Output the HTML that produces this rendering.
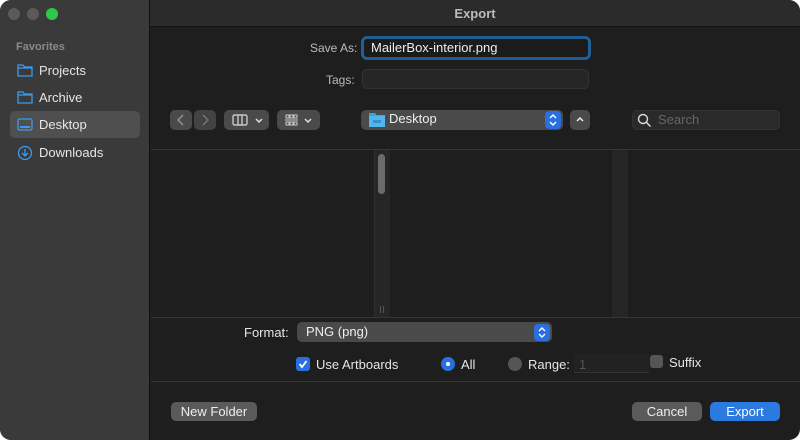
<!DOCTYPE html>
<html><head><meta charset="utf-8"><style>
*{box-sizing:border-box;margin:0;padding:0}
body{width:800px;height:441px;background:#fff;font-family:"Liberation Sans",sans-serif;overflow:hidden;position:relative;font-size:13px;color:#ddd}
.win{position:absolute;left:0;top:0;width:800px;height:440px;border-radius:11px;overflow:hidden;background:#1e1e1e}
.side{position:absolute;left:0;top:0;width:150px;height:440px;background:#3a3a3a;border-right:1px solid #111}
.title{position:absolute;left:150px;top:0;right:0;height:27px;background:#2b2b2b;border-bottom:1px solid #111;text-align:center;font-weight:bold;color:#bbb;line-height:27px;font-size:13px}
.dot{position:absolute;top:8px;width:12px;height:12px;border-radius:50%;background:#5a5a5a}
.abs{position:absolute}
.item{position:absolute;left:17px;font-size:13px;color:#e6e6e6}
.btn{position:absolute;background:#555;border-radius:5px}
.lbl{position:absolute;font-size:12px;color:#bbb}
</style></head><body>
<div class="win">
<div class="side">
 <div class="dot" style="left:8px"></div><div class="dot" style="left:27px"></div><div class="dot" style="left:46px;background:#2ec84a"></div>
 <div class="abs" style="left:16px;top:41px;font-size:11px;color:#8a8a8a;font-weight:bold">Favorites</div>
 <div class="abs" style="left:10px;top:111px;width:130px;height:27px;border-radius:5px;background:#4f4f4f"></div>
 <svg class="abs" style="left:17px;top:63px" width="16" height="14"><path d="M1 2h5l1.5 2H15v9H1z M1 5h14" fill="none" stroke="#3b9bf0" stroke-width="1.3"/></svg>
 <svg class="abs" style="left:17px;top:90px" width="16" height="14"><path d="M1 2h5l1.5 2H15v9H1z M1 5h14" fill="none" stroke="#3b9bf0" stroke-width="1.3"/></svg>
 <svg class="abs" style="left:17px;top:118px" width="16" height="14"><rect x="1" y="1" width="14" height="11" rx="1.5" fill="none" stroke="#3b9bf0" stroke-width="1.3"/><rect x="3" y="8" width="10" height="2" fill="#3b9bf0"/></svg>
 <svg class="abs" style="left:17px;top:145px" width="16" height="16"><circle cx="8" cy="8" r="6.5" fill="none" stroke="#3b9bf0" stroke-width="1.3"/><path d="M8 4v7M5 8l3 3 3-3" fill="none" stroke="#3b9bf0" stroke-width="1.3"/></svg>
 <div class="abs" style="left:39px;top:63px;font-size:13px;color:#e6e6e6">Projects</div>
 <div class="abs" style="left:39px;top:90px;font-size:13px;color:#e6e6e6">Archive</div>
 <div class="abs" style="left:39px;top:117px;font-size:13px;color:#e6e6e6">Desktop</div>
 <div class="abs" style="left:39px;top:145px;font-size:13px;color:#e6e6e6">Downloads</div>
</div>
<div class="title">Export</div>

<div class="lbl" style="left:310px;top:41px">Save As:</div>
<div class="abs" style="left:361px;top:36px;width:230px;height:24px;border:3px solid #1f5f96;border-radius:6px;background:#1b1b1b;padding-left:7px;line-height:17px;font-size:13px;color:#eee">MailerBox-interior.png</div>
<div class="lbl" style="left:326px;top:73px">Tags:</div>
<div class="abs" style="left:362px;top:69px;width:227px;height:20px;border-radius:5px;background:#262626;border:1px solid #333"></div>

<div class="btn" style="left:170px;top:110px;width:22px;height:20px;background:#4a4a4a"></div>
<div class="btn" style="left:194px;top:110px;width:22px;height:20px;background:#434343"></div>
<svg class="abs" style="left:170px;top:110px" width="46" height="20"><path d="M13 5l-5 5 5 5" fill="none" stroke="#999" stroke-width="1.3"/><path d="M33 5l5 5-5 5" fill="none" stroke="#777" stroke-width="1.3"/></svg>
<div class="btn" style="left:224px;top:110px;width:45px;height:20px;background:#4a4a4a"></div>
<svg class="abs" style="left:224px;top:110px" width="45" height="20"><rect x="9" y="5" width="14" height="10" rx="1.5" fill="none" stroke="#ddd" stroke-width="1.2"/><path d="M14 5v10M18 5v10" stroke="#ddd" stroke-width="1.2"/><path d="M32 9l3 3 3-3" fill="none" stroke="#ddd" stroke-width="1.5"/></svg>
<div class="btn" style="left:277px;top:110px;width:43px;height:20px;background:#4a4a4a"></div>
<svg class="abs" style="left:277px;top:110px" width="43" height="20"><g fill="none" stroke="#ccc" stroke-width="1"><rect x="9" y="5" width="3" height="3"/><rect x="13" y="5" width="3" height="3"/><rect x="17" y="5" width="3" height="3"/><rect x="9" y="12" width="3" height="3"/><rect x="13" y="12" width="3" height="3"/><rect x="17" y="12" width="3" height="3"/><path d="M8 10h13"/></g><path d="M28 9l3 3 3-3" fill="none" stroke="#ddd" stroke-width="1.5"/></svg>
<div class="btn" style="left:361px;top:110px;width:202px;height:20px;background:#4a4a4a"></div>
<svg class="abs" style="left:369px;top:112px" width="16" height="15"><path d="M0 1h6l1.5 2H16v12H0z" fill="#3aa3e0"/><rect x="0" y="4" width="16" height="11" fill="#4fb6ee"/><rect x="4" y="8" width="8" height="3" fill="#3a8fc8"/></svg>
<div class="abs" style="left:389px;top:111px;font-size:13px;color:#eee">Desktop</div>
<div class="abs" style="left:545px;top:111px;width:16px;height:18px;border-radius:4px;background:#2a6fe0"></div>
<svg class="abs" style="left:545px;top:111px" width="16" height="18"><path d="M5 7l3-3 3 3M5 11l3 3 3-3" fill="none" stroke="#fff" stroke-width="1.4"/></svg>
<div class="btn" style="left:570px;top:110px;width:20px;height:20px;background:#4a4a4a"></div>
<svg class="abs" style="left:570px;top:110px" width="20" height="20"><path d="M7 11l3-3 3 3" fill="none" stroke="#eee" stroke-width="1.5"/></svg>
<div class="abs" style="left:632px;top:110px;width:148px;height:20px;border-radius:5px;background:#2a2a2a;border:1px solid #333"></div>
<svg class="abs" style="left:636px;top:112px" width="16" height="16"><circle cx="7" cy="7" r="4.5" fill="none" stroke="#ddd" stroke-width="1.4"/><path d="M10.5 10.5l4 4" stroke="#ddd" stroke-width="1.5"/></svg>
<div class="abs" style="left:658px;top:112px;font-size:13px;color:#666">Search</div>

<div class="abs" style="left:151px;top:149px;width:649px;height:1px;background:#363636"></div>
<div class="abs" style="left:374px;top:150px;width:16px;height:167px;background:#262626;border-left:1px solid #2e2e2e"></div>
<div class="abs" style="left:378px;top:154px;width:7px;height:40px;border-radius:4px;background:#6b6b6b"></div>
<div class="abs" style="left:380px;top:306px;width:1px;height:7px;background:#555"></div><div class="abs" style="left:383px;top:306px;width:1px;height:7px;background:#555"></div>
<div class="abs" style="left:612px;top:150px;width:16px;height:167px;background:#262626"></div>
<div class="abs" style="left:151px;top:317px;width:649px;height:1px;background:#363636"></div>

<div class="abs" style="left:244px;top:325px;font-size:13px;color:#e6e6e6">Format:</div>
<div class="btn" style="left:297px;top:322px;width:255px;height:20px;background:#4a4a4a"></div>
<div class="abs" style="left:306px;top:324px;font-size:13px;color:#eee">PNG (png)</div>
<div class="abs" style="left:534px;top:324px;width:16px;height:17px;border-radius:4px;background:#2a6fe0"></div>
<svg class="abs" style="left:534px;top:324px" width="16" height="17"><path d="M5 7l3-3 3 3M5 10l3 3 3-3" fill="none" stroke="#fff" stroke-width="1.4"/></svg>

<div class="abs" style="left:296px;top:357px;width:14px;height:14px;border-radius:3px;background:#2a6fe0"></div>
<svg class="abs" style="left:296px;top:357px" width="14" height="14"><path d="M3.5 7l2.5 3 4.5-6" fill="none" stroke="#fff" stroke-width="1.8"/></svg>
<div class="abs" style="left:316px;top:357px;font-size:13px;color:#e6e6e6">Use Artboards</div>
<div class="abs" style="left:441px;top:357px;width:14px;height:14px;border-radius:50%;background:#2a6fe0"></div>
<div class="abs" style="left:446px;top:362px;width:4px;height:4px;border-radius:50%;background:#fff"></div>
<div class="abs" style="left:461px;top:357px;font-size:13px;color:#e6e6e6">All</div>
<div class="abs" style="left:508px;top:357px;width:14px;height:14px;border-radius:50%;background:#555"></div>
<div class="abs" style="left:528px;top:357px;font-size:13px;color:#e6e6e6">Range:</div>
<div class="abs" style="left:574px;top:353px;width:75px;height:20px;background:#222;border-bottom:1px solid #333"></div>
<div class="abs" style="left:579px;top:357px;font-size:13px;color:#555">1</div>
<div class="abs" style="left:650px;top:355px;width:13px;height:13px;border-radius:3px;background:#555"></div>
<div class="abs" style="left:669px;top:355px;font-size:13px;color:#e6e6e6">Suffix</div>

<div class="abs" style="left:151px;top:381px;width:649px;height:1px;background:#363636"></div>
<div class="btn" style="left:171px;top:402px;width:86px;height:19px;background:#5a5a5a"></div>
<div class="abs" style="left:171px;top:404px;width:86px;text-align:center;font-size:13px;color:#eee">New Folder</div>
<div class="btn" style="left:632px;top:402px;width:70px;height:19px;background:#5a5a5a"></div>
<div class="abs" style="left:632px;top:404px;width:70px;text-align:center;font-size:13px;color:#eee">Cancel</div>
<div class="btn" style="left:710px;top:402px;width:70px;height:19px;background:#2a7ae0"></div>
<div class="abs" style="left:710px;top:404px;width:70px;text-align:center;font-size:13px;color:#fff">Export</div>
</div>
</body></html>
